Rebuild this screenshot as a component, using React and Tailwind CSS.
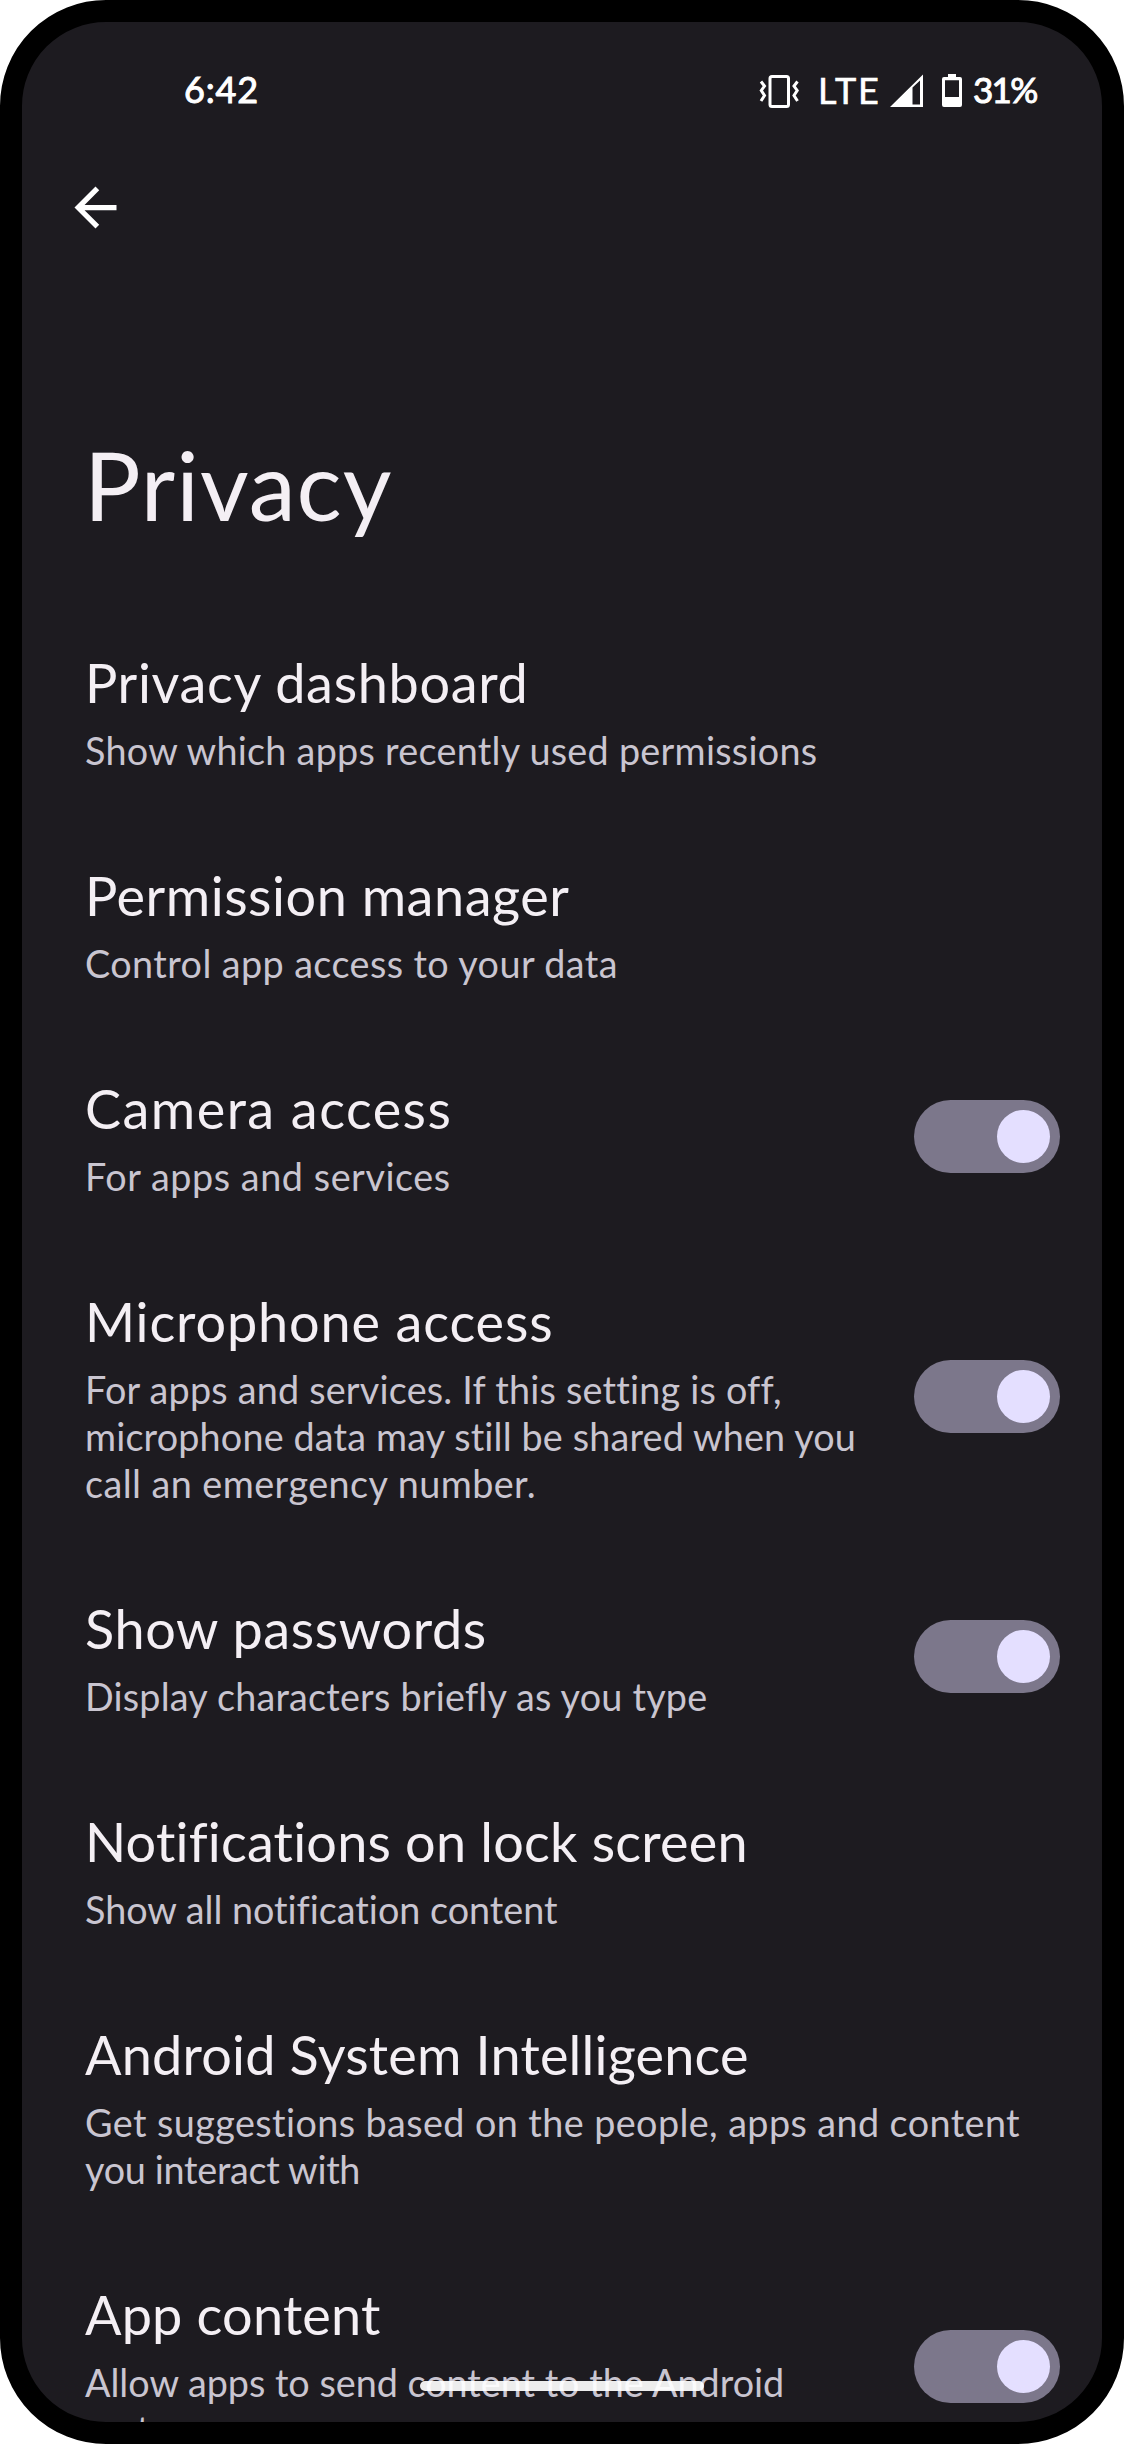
import React from "react";

const items = [
  {
    title: "Privacy dashboard",
    spacing: "tracking-[0.68px]",
    lines: [["Show which apps recently used permissions", "tracking-[0.27px]"]],
  },
  {
    title: "Permission manager",
    spacing: "tracking-[0.53px]",
    lines: [["Control app access to your data", "tracking-[0.41px]"]],
  },
  {
    title: "Camera access",
    spacing: "tracking-[1.45px]",
    lines: [["For apps and services", "tracking-[0.56px]"]],
    toggle: true,
  },
  {
    title: "Microphone access",
    spacing: "tracking-[0.86px]",
    lines: [
      ["For apps and services. If this setting is off,", "tracking-[0.21px]"],
      ["microphone data may still be shared when you", "tracking-[0.16px]"],
      ["call an emergency number.", "tracking-[0.45px]"],
    ],
    toggle: true,
  },
  {
    title: "Show passwords",
    spacing: "tracking-[0.62px]",
    lines: [["Display characters briefly as you type", "tracking-[0.21px]"]],
    toggle: true,
  },
  {
    title: "Notifications on lock screen",
    spacing: "tracking-[0.2px]",
    lines: [["Show all notification content", "tracking-[-0.02px]"]],
  },
  {
    title: "Android System Intelligence",
    spacing: "tracking-[0.2px]",
    lines: [
      ["Get suggestions based on the people, apps and content", "tracking-[0.41px]"],
      ["you interact with", "tracking-[-0.3px]"],
    ],
  },
  {
    title: "App content",
    spacing: "tracking-[0.2px]",
    lines: [
      ["Allow apps to send content to the Android", "tracking-[-0.01px]"],
      ["system", "tracking-[0px]"],
    ],
    toggle: true,
  },
];

function Toggle() {
  return (
    <button
      type="button"
      role="switch"
      aria-checked="true"
      className="flex h-[73px] w-[146px] shrink-0 items-center justify-end rounded-full bg-[#7c778b] pr-[10px]"
    >
      <span className="size-[53px] rounded-full bg-[#e4dfff]" />
    </button>
  );
}

function Item({ title, spacing, lines, toggle }) {
  return (
    <li className="flex items-center justify-between py-[44px] pr-[42px] pl-[63px]">
      <div className="-mb-px pt-[2px] whitespace-nowrap">
        <h2 className={`text-[54px] leading-[66px] text-[#f4eff4] ${spacing}`}>{title}</h2>
        <p className="mt-[11px] text-[37.75px] leading-[47px] text-[#c9c5d0]">
          {lines.map(([text, tracking]) => (
            <span key={text} className={`block ${tracking}`}>
              {text}
            </span>
          ))}
        </p>
      </div>
      {toggle && <Toggle />}
    </li>
  );
}

function StatusBar() {
  return (
    <div className="flex h-[154px] shrink-0 items-start justify-between pt-[52px] pr-[63px] pl-[162px] text-[36px] leading-[36px] text-white">
      <span className="-mt-[3px] tracking-[0.8px] [-webkit-text-stroke:1px_white]">6:42</span>
      <div className="flex items-start">
        <svg className="h-[34px] w-[40px]" viewBox="0 0 40 34" fill="none" stroke="white" strokeWidth="3">
          <rect x="11" y="2.5" width="18.5" height="30" rx="2" />
          <path d="M2 7.5 L5.5 12 L2.3 16.5 L5.5 21.5 L2 27" />
          <path d="M38.5 7.5 L35 12 L38.2 16.5 L35 21.5 L38.5 27" />
        </svg>
        <span className="-mt-[2px] ml-[19px] w-[71px] tracking-[1.8px] [-webkit-text-stroke:0.6px_white]">LTE</span>
        <svg className="h-[34px] w-[34px]" viewBox="0 0 34 34" fill="white">
          <path fillRule="evenodd" d="M1 33 H34 V0.5 Z M23.5 30.5 V13.5 L31 6.5 V30.5 Z" />
        </svg>
        <svg className="ml-[19px] h-[33px] w-[20px]" viewBox="0 0 20 33" fill="white">
          <path
            fillRule="evenodd"
            d="M6 0 H14 V3 H18 Q20 3 20 5 V31 Q20 33 18 33 H2 Q0 33 0 31 V5 Q0 3 2 3 H6 Z M3 6.3 V23 H17 V6.3 Z"
          />
        </svg>
        <span className="-mt-[3px] ml-[11px] w-[66px] text-[35px] tracking-[-1.7px] [-webkit-text-stroke:1px_white]">
          31%
        </span>
      </div>
    </div>
  );
}

export default function App() {
  return (
    <div className="bg-white font-['Lato',sans-serif]">
      <main className="relative flex h-[2444px] w-[1124px] flex-col overflow-hidden rounded-[106px] border-[22px] border-black bg-[#1d1b20]">
        <StatusBar />
        <button type="button" aria-label="Back" className="ml-[42px] size-[63px] shrink-0">
          <svg className="size-[63px]" viewBox="0 0 24 24" fill="white">
            <path d="M20 11H7.83l5.59-5.59L12 4l-8 8 8 8 1.41-1.41L7.83 13H20v-2z" />
          </svg>
        </button>
        <h1 className="mt-[189px] h-[176px] shrink-0 pl-[62px] text-[94.5px] leading-[114px] tracking-[1px] text-[#f4eff4]">
          Privacy
        </h1>
        <ul className="shrink-0">
          {items.map((item) => (
            <Item key={item.title} {...item} />
          ))}
        </ul>
        <div className="absolute bottom-[31px] left-[398px] h-[10px] w-[284px] rounded-full bg-white/92" />
      </main>
    </div>
  );
}
